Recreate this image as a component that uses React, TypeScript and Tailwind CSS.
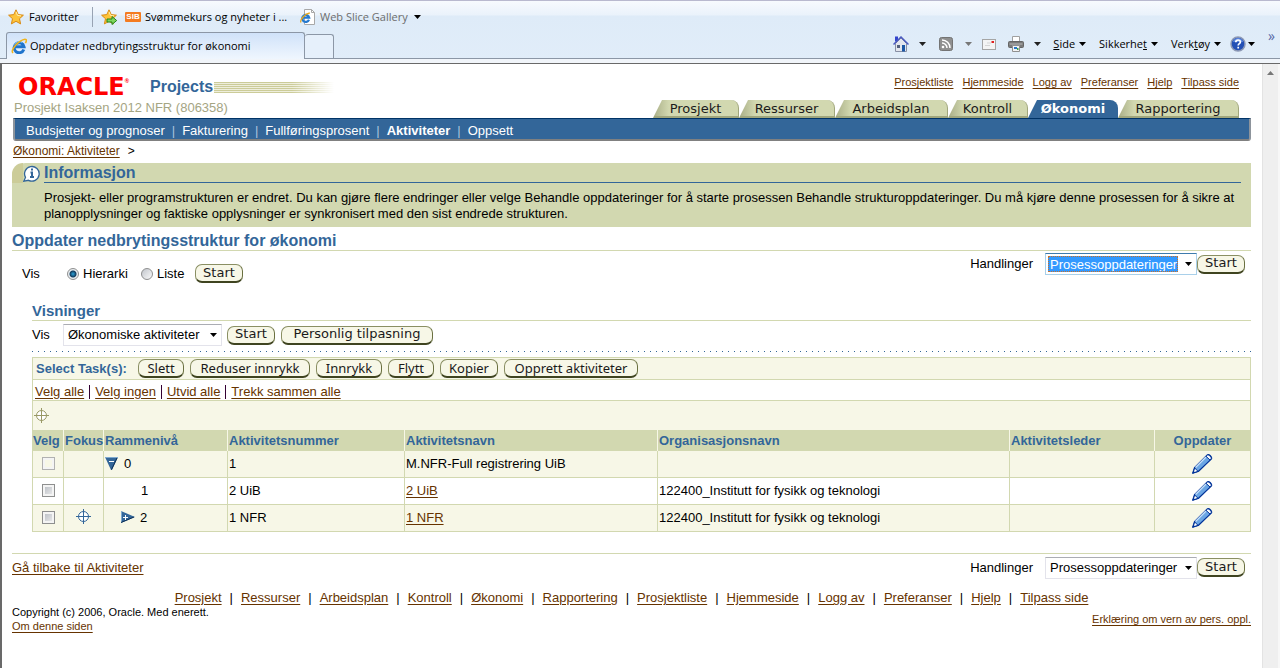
import type { ReactNode } from 'react';

const topLinks = ['Prosjektliste', 'Hjemmeside', 'Logg av', 'Preferanser', 'Hjelp', 'Tilpass side'];

const tabs = [
  { label: 'Prosjekt', width: 'w-[86px]' },
  { label: 'Ressurser', width: 'w-[96px]' },
  { label: 'Arbeidsplan', width: 'w-[113px]' },
  { label: 'Kontroll', width: 'w-[80px]' },
  { label: 'Økonomi', width: 'w-[90px]' },
  { label: 'Rapportering', width: 'w-[121px]' },
];

const subTabs = ['Budsjetter og prognoser', 'Fakturering', 'Fullføringsprosent', 'Aktiviteter', 'Oppsett'];

const taskActions = [
  { label: 'Slett', width: 'w-[46px]' },
  { label: 'Reduser innrykk', width: 'w-[120px]' },
  { label: 'Innrykk', width: 'w-[66px]' },
  { label: 'Flytt', width: 'w-[46px]' },
  { label: 'Kopier', width: 'w-[58px]' },
  { label: 'Opprett aktiviteter', width: 'w-[134px]' },
];

const treeLinks = ['Velg alle', 'Velg ingen', 'Utvid alle', 'Trekk sammen alle'];

const footerLinks = [
  'Prosjekt', 'Ressurser', 'Arbeidsplan', 'Kontroll', 'Økonomi', 'Rapportering',
  'Prosjektliste', 'Hjemmeside', 'Logg av', 'Preferanser', 'Hjelp', 'Tilpass side',
];

const rows = [
  { level: '0', number: '1', name: 'M.NFR-Full registrering UiB', org: '' },
  { level: '1', number: '2 UiB', name: '2 UiB', org: '122400_Institutt for fysikk og teknologi' },
  { level: '2', number: '1 NFR', name: '1 NFR', org: '122400_Institutt for fysikk og teknologi' },
];

function Link({ children }: { children: ReactNode }) {
  return (
    <a href="#" className="text-[#663300] underline underline-offset-2">
      {children}
    </a>
  );
}

function Caret({ className = 'text-black' }: { className?: string }) {
  return (
    <svg className={`w-[7px] h-1 shrink-0 ${className}`} viewBox="0 0 7 4" fill="currentColor">
      <path d="M0 0h7L3.5 4z" />
    </svg>
  );
}

function PillButton({ children, width, wide = false }: { children: ReactNode; width: string; wide?: boolean }) {
  return (
    <button
      className={`${width} ${
        wide ? "font-['DejaVu_Sans',sans-serif]" : "font-['Noto_Sans',sans-serif]"
      } h-[19px] shrink-0 rounded-[7px] border border-[#8a8f63] border-b-2 border-b-[#3f4420] border-r-[#6a7040] bg-[#f7f7e7] text-[13px] leading-[14px] pb-px text-[#1a1a1a] whitespace-nowrap`}
    >
      {children}
    </button>
  );
}

function ActionPicker({ id, active = false }: { id: string; active?: boolean }) {
  return (
    <div className="flex items-center pr-[6px]">
      <label htmlFor={id} className="mr-3">Handlinger</label>
      <div
        className={`flex items-center h-[22px] w-[152px] border bg-white px-[2px] ${
          active ? 'border-[#a9d0ea] border-t-[#3d7bad]' : 'border-[#e3e3eb] border-t-[#abadb3]'
        }`}
      >
        <select
          id={id}
          className={`appearance-none h-4 w-[130px] pl-[2px] mr-[7px] outline-none leading-4 ${
            active ? 'bg-[#3399ff] text-white border border-dotted border-[#c8702a] pl-px' : 'bg-white'
          }`}
        >
          <option>Prosessoppdateringer</option>
        </select>
        <Caret />
      </div>
      <PillButton width="w-12" wide>Start</PillButton>
    </div>
  );
}

function IeIcon() {
  return (
    <svg className="w-4 h-4 shrink-0" viewBox="0 0 16 16" fill="none">
      <path d="M12.800 11.500A5 5 0 1 1 13 8.700H4" stroke="#1f74cc" strokeWidth="3" />
      <path d="M3.500 6.500A5 5 0 0 1 11 4.500" stroke="#7cc4f5" strokeWidth="1" />
      <path d="M2 15C-1 12 8 2 14 1.200c2 0 1.400 2.200.4 4" stroke="#f0b41c" strokeWidth="1.600" />
    </svg>
  );
}

function StarIcon({ arrow = false }: { arrow?: boolean }) {
  return (
    <svg className="w-4 h-4 shrink-0" viewBox="0 0 16 16">
      <path
        d="M8 .8l2.200 4.800 5.200.6-3.900 3.500 1.100 5.200L8 12.300l-4.600 2.600 1.100-5.200L.6 6.200l5.200-.6z"
        fill="#fdc33a" stroke="#d98a14" strokeWidth="1"
      />
      <path d="M8 2.800l1.500 3.600 3.500.5" fill="none" stroke="#fff0b0" />
      {arrow && <path d="M6 10h5V7.500l4.700 4-4.700 4V13H6z" fill="#7fd65c" stroke="#23851a" strokeWidth="1" />}
    </svg>
  );
}

function BookmarkPageIcon() {
  return (
    <svg className="w-4 h-4 shrink-0" viewBox="0 0 16 16" fill="none">
      <path d="M4.500.5h7l3 3v12h-10z" fill="#fff" stroke="#a8a8a8" />
      <path d="M11.500.5v3h3" stroke="#a8a8a8" />
      <path d="M9 10.800A3.500 3.500 0 1 1 9.200 8.700H3" stroke="#2479cf" strokeWidth="2.200" />
      <path d="M1 13.500C-.5 11 5 4.500 9.800 4" stroke="#e8a81c" strokeWidth="1.300" />
    </svg>
  );
}

function HomeIcon() {
  return (
    <svg className="w-4 h-4" viewBox="0 0 16 16" fill="none">
      <path d="M2 .5h3v5H2z" fill="#3344cc" />
      <path d="M2.500 7.500L8 2l5.500 5.500v8h-11z" fill="#e3e6ee" stroke="#8890a5" />
      <path d="M.5 8.500L8 1l7.500 7.500" stroke="#4c5bc0" strokeWidth="1.500" />
      <path d="M4 9h3v3H4z" fill="#53607c" />
      <path d="M9 9h3v6.500H9z" fill="#1c57a5" />
    </svg>
  );
}

function FeedIcon() {
  return (
    <svg className="w-[14px] h-[14px]" viewBox="0 0 14 14" fill="none">
      <rect x=".5" y=".5" width="13" height="13" rx="2" fill="#8f8f8f" stroke="#747474" />
      <circle cx="4" cy="10" r="1.300" fill="#fff" />
      <path d="M3 6a5 5 0 0 1 5 5M3 3a8 8 0 0 1 8 8" stroke="#fff" strokeWidth="1.500" />
    </svg>
  );
}

function MailIcon() {
  return (
    <svg className="w-[14px] h-[11px]" viewBox="0 0 14 11" fill="none">
      <rect x=".5" y=".5" width="13" height="10" fill="#f4f4f4" stroke="#a5a5a5" />
      <path d="M9.500 2h2.500v2H9.500z" fill="#e02020" />
      <path d="M5 4h4M3 6.500h5" stroke="#d5d5d5" />
    </svg>
  );
}

function PrinterIcon() {
  return (
    <svg className="w-4 h-4" viewBox="0 0 16 16" fill="none">
      <path d="M4.500.5h7v6h-7z" fill="#fff" stroke="#a0a0a0" />
      <rect x=".5" y="5.500" width="15" height="6" rx="1" fill="#7a7a7a" stroke="#666" />
      <path d="M1.500 8h13" stroke="#b9b9b9" />
      <path d="M4.500 9.500h7v6h-7z" fill="#f4f4f4" stroke="#909090" />
      <path d="M6 12h3" stroke="#2677c8" strokeWidth="2" />
      <path d="M9 13h1.500" stroke="#3ea04a" strokeWidth="2" />
    </svg>
  );
}

function HelpIcon() {
  return (
    <svg className="w-4 h-4" viewBox="0 0 16 16" fill="none">
      <circle cx="8" cy="8" r="7" fill="#2450b5" stroke="#8d99b5" strokeWidth="1.500" />
      <path d="M3 6a5 4 0 0 1 10 0" fill="#5c86dc" />
      <path d="M5.800 6.300c0-3 4.600-3 4.600-.3 0 1.600-2.200 1.600-2.200 3.400M8.200 10.800v1.800" stroke="#fff" strokeWidth="1.700" />
    </svg>
  );
}

function InfoIcon() {
  return (
    <svg className="w-[17px] h-[17px] shrink-0" viewBox="0 0 17 17" fill="none">
      <path d="M.8 16.200l1.700-3.800a7.300 7.300 0 1 1 3 2.900z" fill="#fff" stroke="#336699" strokeWidth="1.300" />
      <path d="M9 3.500v2M7.500 7.500H9V12M7 12h4" stroke="#336699" strokeWidth="2" />
    </svg>
  );
}

function FocusIcon({ className }: { className: string }) {
  return (
    <svg className={`w-[15px] h-[15px] ${className}`} viewBox="0 0 15 15" fill="none" stroke="currentColor">
      <circle cx="7.500" cy="7.500" r="5" fill="#fff" />
      <path d="M7.500 0v15M0 7.500h15" />
    </svg>
  );
}

function ExpandedIcon() {
  return (
    <svg className="w-[13px] h-[13px]" viewBox="0 0 13 13">
      <path d="M0 0h13L7 13H6z" fill="#336699" />
      <path d="M0 .5h13" stroke="#7fa9cf" />
      <path d="M12 1L6.500 12.500" stroke="#0d2f55" />
      <path d="M4 4.500h5" stroke="#fff" />
    </svg>
  );
}

function CollapsedIcon() {
  return (
    <svg className="w-[14px] h-3" viewBox="0 0 14 12">
      <path d="M0 0l14 6L0 12z" fill="#336699" />
      <path d="M.5 0v12" stroke="#7fa9cf" />
      <path d="M0 11.500l13-5.500" stroke="#0d2f55" />
      <path d="M2 6.500h5M4.500 4v5" stroke="#fff" />
    </svg>
  );
}

function PencilIcon() {
  return (
    <svg className="w-[21px] h-5" viewBox="0 0 21 20" strokeLinejoin="round">
      <path d="M.7 19.300l1.800-5.600L15.300.9c1.800-1 5 1.800 4.200 4L6.300 17.500z" fill="#6ba6e4" stroke="#003399" strokeWidth="1.200" />
      <path d="M3.500 13.500L14 3" stroke="#c5e0fa" strokeWidth="1.500" />
      <path d="M14 2.300l1.300-1.200c1.800-.6 4.300 1.800 3.900 3.600L18 6z" fill="#fff" stroke="#003399" strokeWidth="1" />
      <path d="M1 19l1.700-5L6 17.300z" fill="#fff" stroke="#003399" strokeWidth="1" />
      <path d="M.7 19.300l.8-2.600 1.700 1.700z" fill="#003399" />
    </svg>
  );
}

function BrowserChrome() {
  return (
    <header className="font-['Open_Sans',sans-serif] text-[11px] leading-4 text-black bg-[linear-gradient(to_bottom,#f7fafe_0px,#eaf2fb_14px,#deebf8_15px,#e1edf9_100%)] border-t border-[#b9b9cf]">
      <div className="flex items-center h-[31px] pl-2">
        <StarIcon />
        <span className="ml-[5px] w-[55px]">Favoritter</span>
        <span className="w-px h-5 bg-[#98a3b3] mx-2" />
        <StarIcon arrow />
        <span className="ml-2 w-4 h-[10px] rounded-[1px] bg-[#f47b20] font-['Liberation_Sans',sans-serif] text-[8px] leading-[10px] font-bold text-white text-center">SIB</span>
        <span className="ml-1 w-[155px] whitespace-nowrap">Svømmekurs og nyheter i ...</span>
        <BookmarkPageIcon />
        <span className="ml-1 mr-[6px] text-[#6d6d6d]">Web Slice Gallery</span>
        <Caret />
      </div>
      <div className="flex items-stretch h-[27px] border-b border-[#8c97a6]">
        <div className="-mb-px ml-[6px] flex items-center w-[299px] pl-1 rounded-t-[3px] border border-b-0 border-[#8c97a6] bg-[linear-gradient(to_bottom,#d0e2f9,#eff6fe)]">
          <IeIcon />
          <span className="ml-[3px] whitespace-nowrap">Oppdater nedbrytingsstruktur for økonomi</span>
        </div>
        <div className="mt-[2px] w-[29px] rounded-t-[3px] border border-l-0 border-b-0 border-[#8c97a6] bg-[#e6f0fb]" />
        <div className="flex-1 flex items-center justify-end mb-[2px] whitespace-nowrap">
          <HomeIcon />
          <Caret className="ml-[10px] mr-[13px] text-[#222]" />
          <FeedIcon />
          <Caret className="ml-3 mr-[10px] text-[#777]" />
          <MailIcon />
          <span className="ml-3 flex"><PrinterIcon /></span>
          <Caret className="ml-[10px] mr-3 text-[#222]" />
          <span><u>S</u>ide</span>
          <Caret className="ml-1 mr-[13px]" />
          <span>Sikkerhe<u>t</u></span>
          <Caret className="ml-1 mr-[13px]" />
          <span>Verk<u>t</u>øy</span>
          <Caret className="ml-1 mr-[9px]" />
          <HelpIcon />
          <Caret className="ml-[2px] mr-[13px]" />
          <span className="mb-4 mr-[5px] text-sm leading-4 text-[#5566a5]">»</span>
        </div>
      </div>
      <div className="h-1 bg-[#f1f5fa]" />
    </header>
  );
}

function AppHeader() {
  return (
    <div>
      <div className="flex justify-between h-[54px]">
        <div>
          <div className="flex items-center h-9 pt-[10px] pl-[6px]">
            <span className="font-['DejaVu_Sans',sans-serif] text-[24px] font-bold leading-6 text-[#ff0000] w-[124px] whitespace-nowrap">
              ORACLE<span className="align-top font-['Liberation_Sans',sans-serif] text-[6px] leading-3">®</span>
            </span>
            <h1 className="ml-2 text-base leading-5 font-bold text-[#336699]">Projects</h1>
            <span className="ml-px w-[120px] h-[11px] bg-[repeating-linear-gradient(to_bottom,#cccc99_0px,#cccc99_1px,#eeeedc_1px,#eeeedc_2px)] [mask-image:linear-gradient(to_right,black_65%,transparent)]" />
          </div>
          <p className="pl-[2px] leading-[15px] text-[#a5a583]">Prosjekt Isaksen 2012 NFR (806358)</p>
        </div>
        <div className="flex flex-col items-end justify-between pr-3">
          <nav className="flex gap-[9px] pt-[11px] text-[11px] leading-[14px]">
            {topLinks.map((l) => <Link key={l}>{l}</Link>)}
          </nav>
          <nav className="flex h-[18px]">
            {tabs.map((t) => {
              const active = t.label === 'Økonomi';
              return (
                <a
                  key={t.label}
                  href="#"
                  className={`${t.width} text-center font-['DejaVu_Sans',sans-serif] text-[13px] leading-[17px] rounded-tr-[8px] [clip-path:polygon(9px_0,100%_0,100%_100%,0_100%)] ${
                    active
                      ? 'bg-[#336699] font-bold text-white'
                      : 'bg-[linear-gradient(to_right,#a9ae87,#d2d8b0_16px)] text-[#1c1c1c] border-b-2 border-b-[#a0a67c] border-r border-r-[#a0a67c]'
                  }`}
                >
                  {t.label}
                </a>
              );
            })}
          </nav>
        </div>
      </div>
      <nav className="flex items-center h-[23px] ml-px rounded-b-[3px] bg-[#336699] border-t border-t-[#003366] border-b-2 border-b-[#808080] border-x-2 border-x-[#8d949c] pl-[11px] pt-[3px] text-white">
        {subTabs.map((s, i) => (
          <span key={s} className="flex">
            {i > 0 && <span className="px-[7px] text-[#a9c4de]">|</span>}
            <a href="#" className={s === 'Aktiviteter' ? 'font-bold' : ''}>{s}</a>
          </span>
        ))}
      </nav>
    </div>
  );
}

function InfoBox() {
  return (
    <section className="mt-1 h-16 rounded-tl-[14px] bg-[#d2d8b0] pr-[10px]">
      <div className="flex h-5">
        <div className="w-[11px] rounded-tl-[14px] bg-[#cccc99]" />
        <div className="w-[21px] pt-[2px]"><InfoIcon /></div>
        <h2 className="flex-1 border-b border-[#336699] text-base leading-[19px] font-bold text-[#336699]">Informasjon</h2>
      </div>
      <p className="pl-8 pt-[7px]">
        Prosjekt- eller programstrukturen er endret. Du kan gjøre flere endringer eller velge Behandle oppdateringer for å starte prosessen Behandle strukturoppdateringer. Du må kjøre denne prosessen for å sikre at planopplysninger og faktiske opplysninger er synkronisert med den sist endrede strukturen.
      </p>
    </section>
  );
}

function TaskTable() {
  const cell = 'border border-[#d2d8b0] px-px';
  const head = 'border-x border-[#f7f7e7] px-px text-left font-bold';
  return (
    <table className="w-full table-fixed border-collapse border border-[#d2d8b0]">
      <colgroup>
        <col className="w-[31px]" />
        <col className="w-10" />
        <col className="w-[124px]" />
        <col className="w-[177px]" />
        <col className="w-[253px]" />
        <col />
        <col className="w-[145px]" />
        <col className="w-24" />
      </colgroup>
      <thead>
        <tr className="h-5 bg-[#d2d8b0] text-[#336699] whitespace-nowrap">
          <th className="text-left font-bold">Velg</th>
          <th className={head}>Fokus</th>
          <th className={head}>Rammenivå</th>
          <th className={head}>Aktivitetsnummer</th>
          <th className={head}>Aktivitetsnavn</th>
          <th className={head}>Organisasjonsnavn</th>
          <th className={head}>Aktivitetsleder</th>
          <th className="border-l border-[#f7f7e7] text-center font-bold">Oppdater</th>
        </tr>
      </thead>
      <tbody>
        {rows.map((r) => (
          <tr key={r.level} className="h-[27px] odd:bg-[#f7f7e7] even:bg-white">
            <td className={cell}>
              <input
                type="checkbox"
                aria-label={`Velg ${r.name}`}
                disabled={r.level === '0'}
                className="block mx-auto mb-[2px] appearance-none w-[13px] h-[13px] border border-[#8e8f8f] bg-[linear-gradient(135deg,#b4b9c0,#f0f0f0)] shadow-[inset_0_0_0_2px_#f4f4f4] disabled:border-[#b1b1b1] disabled:bg-none"
              />
            </td>
            <td className={cell}>
              {r.level === '2' && <FocusIcon className="mx-auto mb-1 text-[#336699]" />}
            </td>
            <td className={cell}>
              <div className="flex items-center">
                {r.level === '0' && <span className="pr-[6px] pb-[2px]"><ExpandedIcon /></span>}
                {r.level === '1' && <span className="w-9" />}
                {r.level === '2' && <span className="pl-4 pr-[5px] pb-[2px]"><CollapsedIcon /></span>}
                {r.level}
              </div>
            </td>
            <td className={cell}>{r.number}</td>
            <td className={cell}>{r.level === '0' ? r.name : <Link>{r.name}</Link>}</td>
            <td className={cell}>{r.org}</td>
            <td className={cell} />
            <td className={cell}>
              <button aria-label="Oppdater" className="block mx-auto"><PencilIcon /></button>
            </td>
          </tr>
        ))}
      </tbody>
    </table>
  );
}

export default function App() {
  const radio =
    'appearance-none w-3 h-3 rounded-full border border-[#8e8f8f] bg-[linear-gradient(135deg,#c2c6cc,#fafafa)] checked:bg-[radial-gradient(circle,#2aa4dc_0px,#123c5e_3px,#e9edf0_4px)]';

  return (
    <div className="min-h-screen flex flex-col bg-white font-['Liberation_Sans',sans-serif] text-[13px] leading-4 text-black">
      <BrowserChrome />
      <div className="flex-1 flex border-t border-l-2 border-[#696969]">
        <main className="flex-1 min-w-0 pl-[10px] pr-[11px]">
          <AppHeader />
          <div className="pt-[2px] pl-px text-xs leading-4">
            <Link>Økonomi: Aktiviteter</Link>
            <span className="ml-2">&gt;</span>
          </div>
          <InfoBox />

          <h2 className="mt-1 h-5 border-b border-[#d2d8b0] text-base leading-[19px] font-bold text-[#336699]">
            Oppdater nedbrytingsstruktur for økonomi
          </h2>
          <div className="flex justify-between items-start h-[50px] pt-[2px]">
            <div className="flex items-center pl-[10px] pt-[11px]">
              <span className="w-[45px]">Vis</span>
              <input id="hierarki" type="radio" name="vis" defaultChecked className={radio} />
              <label htmlFor="hierarki" className="ml-1 w-[58px]">Hierarki</label>
              <span className="w-4 flex"><input id="liste" type="radio" name="vis" className={radio} /></span>
              <label htmlFor="liste" className="w-[38px]">Liste</label>
              <PillButton width="w-12" wide>Start</PillButton>
            </div>
            <ActionPicker id="handlinger-topp" active />
          </div>

          <section className="pl-5">
            <h3 className="h-5 border-b border-[#d2d8b0] text-[15px] leading-[19px] font-bold text-[#336699]">Visninger</h3>
            <div className="flex items-center h-7 mb-[2px]">
              <label htmlFor="visning" className="w-[31px]">Vis</label>
              <div className="flex items-center h-[22px] w-[159px] mr-[5px] px-1 border border-[#e3e3eb] border-t-[#abadb3]">
                <select id="visning" className="appearance-none h-4 w-[142px] bg-white outline-none leading-4">
                  <option>Økonomiske aktiviteter</option>
                </select>
                <Caret />
              </div>
              <PillButton width="w-12" wide>Start</PillButton>
              <span className="w-[6px]" />
              <PillButton width="w-[152px]" wide>Personlig tilpasning</PillButton>
            </div>
            <div className="h-px bg-[linear-gradient(to_right,#336699_1px,transparent_1px)] bg-[length:6px_1px]" />

            <div className="mt-[5px] border border-b-0 border-[#d2d8b0]">
              <div className="flex items-center gap-[6px] h-[22px] pl-[3px] bg-[#f7f7e7] border-b border-[#d2d8b0]">
                <span className="w-24 font-bold text-[#336699]">Select Task(s):</span>
                {taskActions.map((a) => (
                  <PillButton key={a.label} width={a.width}>{a.label}</PillButton>
                ))}
              </div>
              <div className="flex items-center h-[21px] pl-[2px] pt-[3px] border-b border-[#d2d8b0]">
                {treeLinks.map((l, i) => (
                  <span key={l} className="flex items-center">
                    {i > 0 && <span className="w-px h-[14px] mx-[5px] bg-[#330033]" />}
                    <Link>{l}</Link>
                  </span>
                ))}
              </div>
              <div className="flex items-center h-[29px] pl-px bg-[#f7f7e7]">
                <FocusIcon className="text-[#999966]" />
              </div>
            </div>
            <TaskTable />
          </section>

          <div className="mt-[21px] mb-[9px] flex justify-between items-center h-7 border-t border-[#d2d8b0]">
            <Link>Gå tilbake til Aktiviteter</Link>
            <ActionPicker id="handlinger-bunn" />
          </div>

          <footer>
            <nav className="flex justify-center">
              {footerLinks.map((l, i) => (
                <span key={l} className="flex">
                  {i > 0 && <span className="px-2">|</span>}
                  <Link>{l}</Link>
                </span>
              ))}
            </nav>
            <div className="-mt-px flex justify-between items-center text-[11px] leading-[14px]">
              <div>
                <p>Copyright (c) 2006, Oracle. Med enerett.</p>
                <Link>Om denne siden</Link>
              </div>
              <Link>Erklæring om vern av pers. oppl.</Link>
            </div>
          </footer>
        </main>
        <aside className="w-[18px] shrink-0 flex justify-center pt-[7px] border-l border-r-2 border-l-[#e3e3e3] border-r-[#f7f7f7] bg-[#efefef]">
          <Caret className="rotate-180 text-[#777]" />
        </aside>
      </div>
    </div>
  );
}
